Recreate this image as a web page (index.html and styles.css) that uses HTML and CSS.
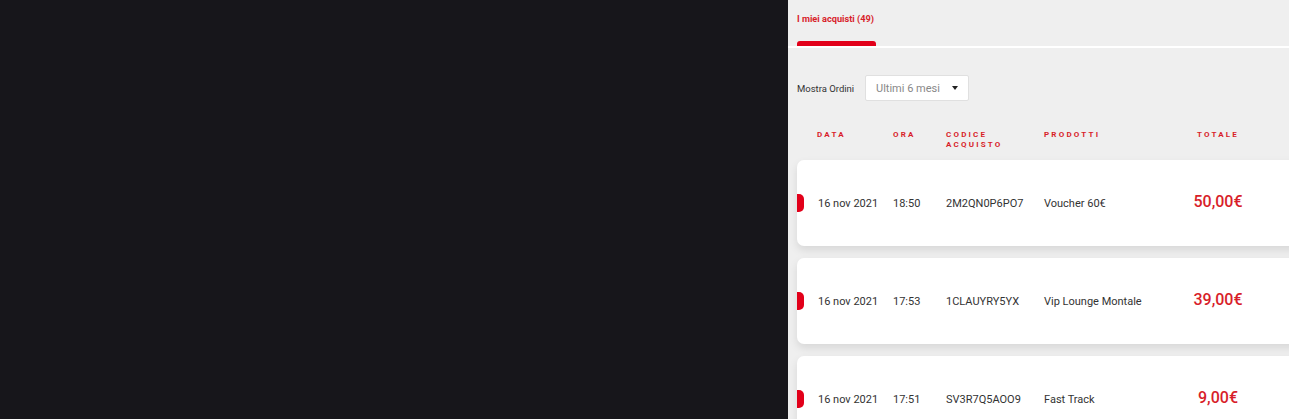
FILE: index.html
```html
<!DOCTYPE html>
<html lang="it">

<head>
    <meta charset="UTF-8">
    <meta name="viewport" content="width=device-width, initial-scale=1.0">
    <title>I miei acquisti</title>
    <link rel="stylesheet" href="styles.css">
</head>

<body>
    <div class="side"></div>

    <div class="main">
        <div class="tabs">
            <div class="tab active">I miei acquisti (49)</div>
        </div>

        <div class="filter">
            <span class="filter-label">Mostra Ordini</span>
            <div class="select">
                <span>Ultimi 6 mesi</span>
                <span class="caret"></span>
            </div>
        </div>

        <div class="orders">
            <div class="row head">
                <div>DATA</div>
                <div>ORA</div>
                <div>CODICE<br>ACQUISTO</div>
                <div>PRODOTTI</div>
                <div class="total">TOTALE</div>
            </div>

            <div class="row card">
                <div>16 nov 2021</div>
                <div>18:50</div>
                <div>2M2QN0P6PO7</div>
                <div>Voucher 60€</div>
                <div class="total">50,00€</div>
            </div>

            <div class="row card">
                <div>16 nov 2021</div>
                <div>17:53</div>
                <div>1CLAUYRY5YX</div>
                <div>Vip Lounge Montale</div>
                <div class="total">39,00€</div>
            </div>

            <div class="row card">
                <div>16 nov 2021</div>
                <div>17:51</div>
                <div>SV3R7Q5AOO9</div>
                <div>Fast Track</div>
                <div class="total">9,00€</div>
            </div>
        </div>
    </div>
</body>

</html>
```

FILE: styles.css
```css
body {
    margin: 0;
    height: 419px;
    display: flex;
    overflow: hidden;
    font-family: Roboto, 'Liberation Sans', Arial, sans-serif;
    color: #333;
}

.side {
    width: 788px;
    flex-shrink: 0;
    background-color: #17161b;
}

.main {
    flex: 1;
    background-color: #efefef;
    overflow: hidden;
}

.tabs {
    border-bottom: 2px solid #fff;
    padding-left: 9px;
    height: 46px;
    display: flex;
}

.tab {
    width: 79px;
    padding-top: 13px;
    font-size: 9.2px;
    font-weight: 700;
    color: #d81e2a;
    white-space: nowrap;
    position: relative;
}

.tab.active::after {
    content: '';
    position: absolute;
    left: 0;
    right: 0;
    bottom: 0;
    height: 5px;
    background-color: #e2001a;
    border-radius: 3px 3px 0 0;
}

.filter {
    display: flex;
    align-items: center;
    padding: 27px 0 0 9px;
}

.filter-label {
    font-size: 9.5px;
    color: #333;
    width: 68px;
}

.select {
    box-sizing: border-box;
    width: 104px;
    height: 26px;
    padding: 0 10px;
    display: flex;
    align-items: center;
    justify-content: space-between;
    background-color: #fff;
    border: 1px solid #e0e0e0;
    border-radius: 2px;
    font-size: 11px;
    color: #888;
}

.caret {
    width: 0;
    height: 0;
    border-left: 3.5px solid transparent;
    border-right: 3.5px solid transparent;
    border-top: 4px solid #222;
}

.orders {
    padding: 29px 0 0 9px;
    display: flex;
    flex-direction: column;
    gap: 12px;
}

.row {
    display: grid;
    grid-template-columns: 76px 53px 98px 124px 100px;
    padding-left: 20px;
    width: 520px;
}

.head {
    font-size: 8px;
    font-weight: 700;
    letter-spacing: 2.2px;
    line-height: 10px;
    color: #d81e2a;
    height: 18px;
}

.card {
    position: relative;
    height: 86px;
    align-items: center;
    background-color: #fff;
    border-radius: 7px;
    box-shadow: 0 4px 8px rgba(0, 0, 0, 0.1);
    font-size: 11px;
    color: #333;
}

.card > div:first-child {
    padding-left: 1px;
}

.card::before {
    content: '';
    position: absolute;
    left: 0;
    top: 34px;
    width: 7px;
    height: 18px;
    background-color: #e2001a;
    border-radius: 0 5px 5px 0;
}

.total {
    text-align: center;
}

.card .total {
    font-size: 16px;
    font-weight: 500;
    color: #d81e2a;
    padding-bottom: 4px;
}
```
